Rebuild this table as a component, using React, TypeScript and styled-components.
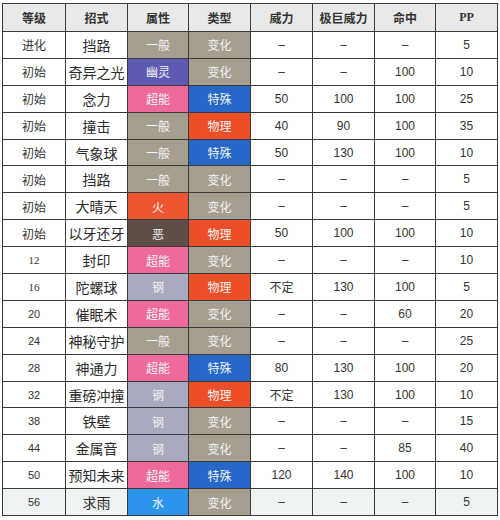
import React, { FC } from 'react'
import styled, { createGlobalStyle } from 'styled-components'

const GlobalStyle = createGlobalStyle`
  html, body {
    margin: 0;
    padding: 0;
    background: #ffffff;
  }
  body {
    font-family: 'Noto Sans CJK SC', 'Liberation Sans', sans-serif;
    color: #333;
  }
`

const Page = styled.div`
  padding: 3px 0 0 2px;
  width: 500px;
  height: 520px;
  box-sizing: border-box;
`

const Table = styled.table`
  border-collapse: collapse;
  table-layout: fixed;
  width: 495px;
  border: 1px solid #7a7a7a;
`

const HeadRow = styled.tr`
  height: 28px;
  background: #e9e9e9;
`

const Row = styled.tr<{ $last?: boolean }>`
  height: 26.9px;
  background: ${(p) => (p.$last ? '#eff3f3' : '#ffffff')};
`

const Th = styled.th<{ $serif?: boolean }>`
  border: 1px solid #3a3a3a;
  padding: 0;
  font-size: 12px;
  font-weight: bold;
  color: #333;
  text-align: center;
  font-family: ${(p) =>
    p.$serif
      ? "'Liberation Serif', serif"
      : "'Noto Sans CJK SC', sans-serif"};
`

const Td = styled.td<{ $small?: boolean; $serif?: boolean }>`
  border: 1px solid #3a3a3a;
  padding: 0;
  text-align: center;
  color: #333;
  font-size: ${(p) => (p.$small ? '11px' : '12px')};
  font-family: ${(p) =>
    p.$serif
      ? "'Liberation Serif', 'Noto Sans CJK SC', serif"
      : "'Liberation Sans', 'Noto Sans CJK SC', sans-serif"};
`

const MoveName = styled.td`
  border: 1px solid #3a3a3a;
  padding: 0;
  text-align: center;
  color: #2b2b2b;
  font-size: 14px;
  font-family: 'Noto Sans CJK SC', sans-serif;
`

const TypeCell = styled.td<{ $bg: string }>`
  border: 1px solid #3a3a3a;
  padding: 0;
  text-align: center;
  background: ${(p) => p.$bg};
  color: #f4f4f4;
  font-size: 12px;
  font-family: 'Noto Sans CJK SC', sans-serif;
`

const typeColors: Record<string, string> = {
  一般: '#a69f90',
  变化: '#a69f90',
  幽灵: '#5f5ab1',
  超能: '#ed6a9a',
  特殊: '#2667c8',
  物理: '#ec4f27',
  火: '#ee5531',
  恶: '#5f4e46',
  钢: '#a9a9c0',
  水: '#2d94ec',
}

type Move = [string, string, string, string, string, string, string, string]

const moves: Move[] = [
  ['进化', '挡路', '一般', '变化', '–', '–', '–', '5'],
  ['初始', '奇异之光', '幽灵', '变化', '–', '–', '100', '10'],
  ['初始', '念力', '超能', '特殊', '50', '100', '100', '25'],
  ['初始', '撞击', '一般', '物理', '40', '90', '100', '35'],
  ['初始', '气象球', '一般', '特殊', '50', '130', '100', '10'],
  ['初始', '挡路', '一般', '变化', '–', '–', '–', '5'],
  ['初始', '大晴天', '火', '变化', '–', '–', '–', '5'],
  ['初始', '以牙还牙', '恶', '物理', '50', '100', '100', '10'],
  ['12', '封印', '超能', '变化', '–', '–', '–', '10'],
  ['16', '陀螺球', '钢', '物理', '不定', '130', '100', '5'],
  ['20', '催眠术', '超能', '变化', '–', '–', '60', '20'],
  ['24', '神秘守护', '一般', '变化', '–', '–', '–', '25'],
  ['28', '神通力', '超能', '特殊', '80', '130', '100', '20'],
  ['32', '重磅冲撞', '钢', '物理', '不定', '130', '100', '10'],
  ['38', '铁壁', '钢', '变化', '–', '–', '–', '15'],
  ['44', '金属音', '钢', '变化', '–', '–', '85', '40'],
  ['50', '预知未来', '超能', '特殊', '120', '140', '100', '10'],
  ['56', '求雨', '水', '变化', '–', '–', '–', '5'],
]

const widths = [63, 62, 61, 62, 62, 62, 61, 62]
const headers = ['等级', '招式', '属性', '类型', '威力', '极巨威力', '命中', 'PP']

const App: FC = () => {
  return (
    <>
      <GlobalStyle />
      <Page>
        <Table>
          <colgroup>
            {widths.map((w, i) => (
              <col key={i} style={{ width: w }} />
            ))}
          </colgroup>
          <thead>
            <HeadRow>
              {headers.map((h) => (
                <Th key={h} $serif={h === 'PP'}>
                  {h}
                </Th>
              ))}
            </HeadRow>
          </thead>
          <tbody>
            {moves.map((m, i) => {
              const [lv, name, attr, kind, power, maxPower, acc, pp] = m
              const numericLv = /^\d+$/.test(lv)
              return (
                <Row key={i} $last={i === moves.length - 1}>
                  <Td $small={numericLv} $serif={lv === '12' || lv === '16'}>
                    {lv}
                  </Td>
                  <MoveName>{name}</MoveName>
                  <TypeCell $bg={typeColors[attr]}>{attr}</TypeCell>
                  <TypeCell $bg={typeColors[kind]}>{kind}</TypeCell>
                  <Td>{power}</Td>
                  <Td>{maxPower}</Td>
                  <Td>{acc}</Td>
                  <Td>{pp}</Td>
                </Row>
              )
            })}
          </tbody>
        </Table>
      </Page>
    </>
  )
}

export default App
